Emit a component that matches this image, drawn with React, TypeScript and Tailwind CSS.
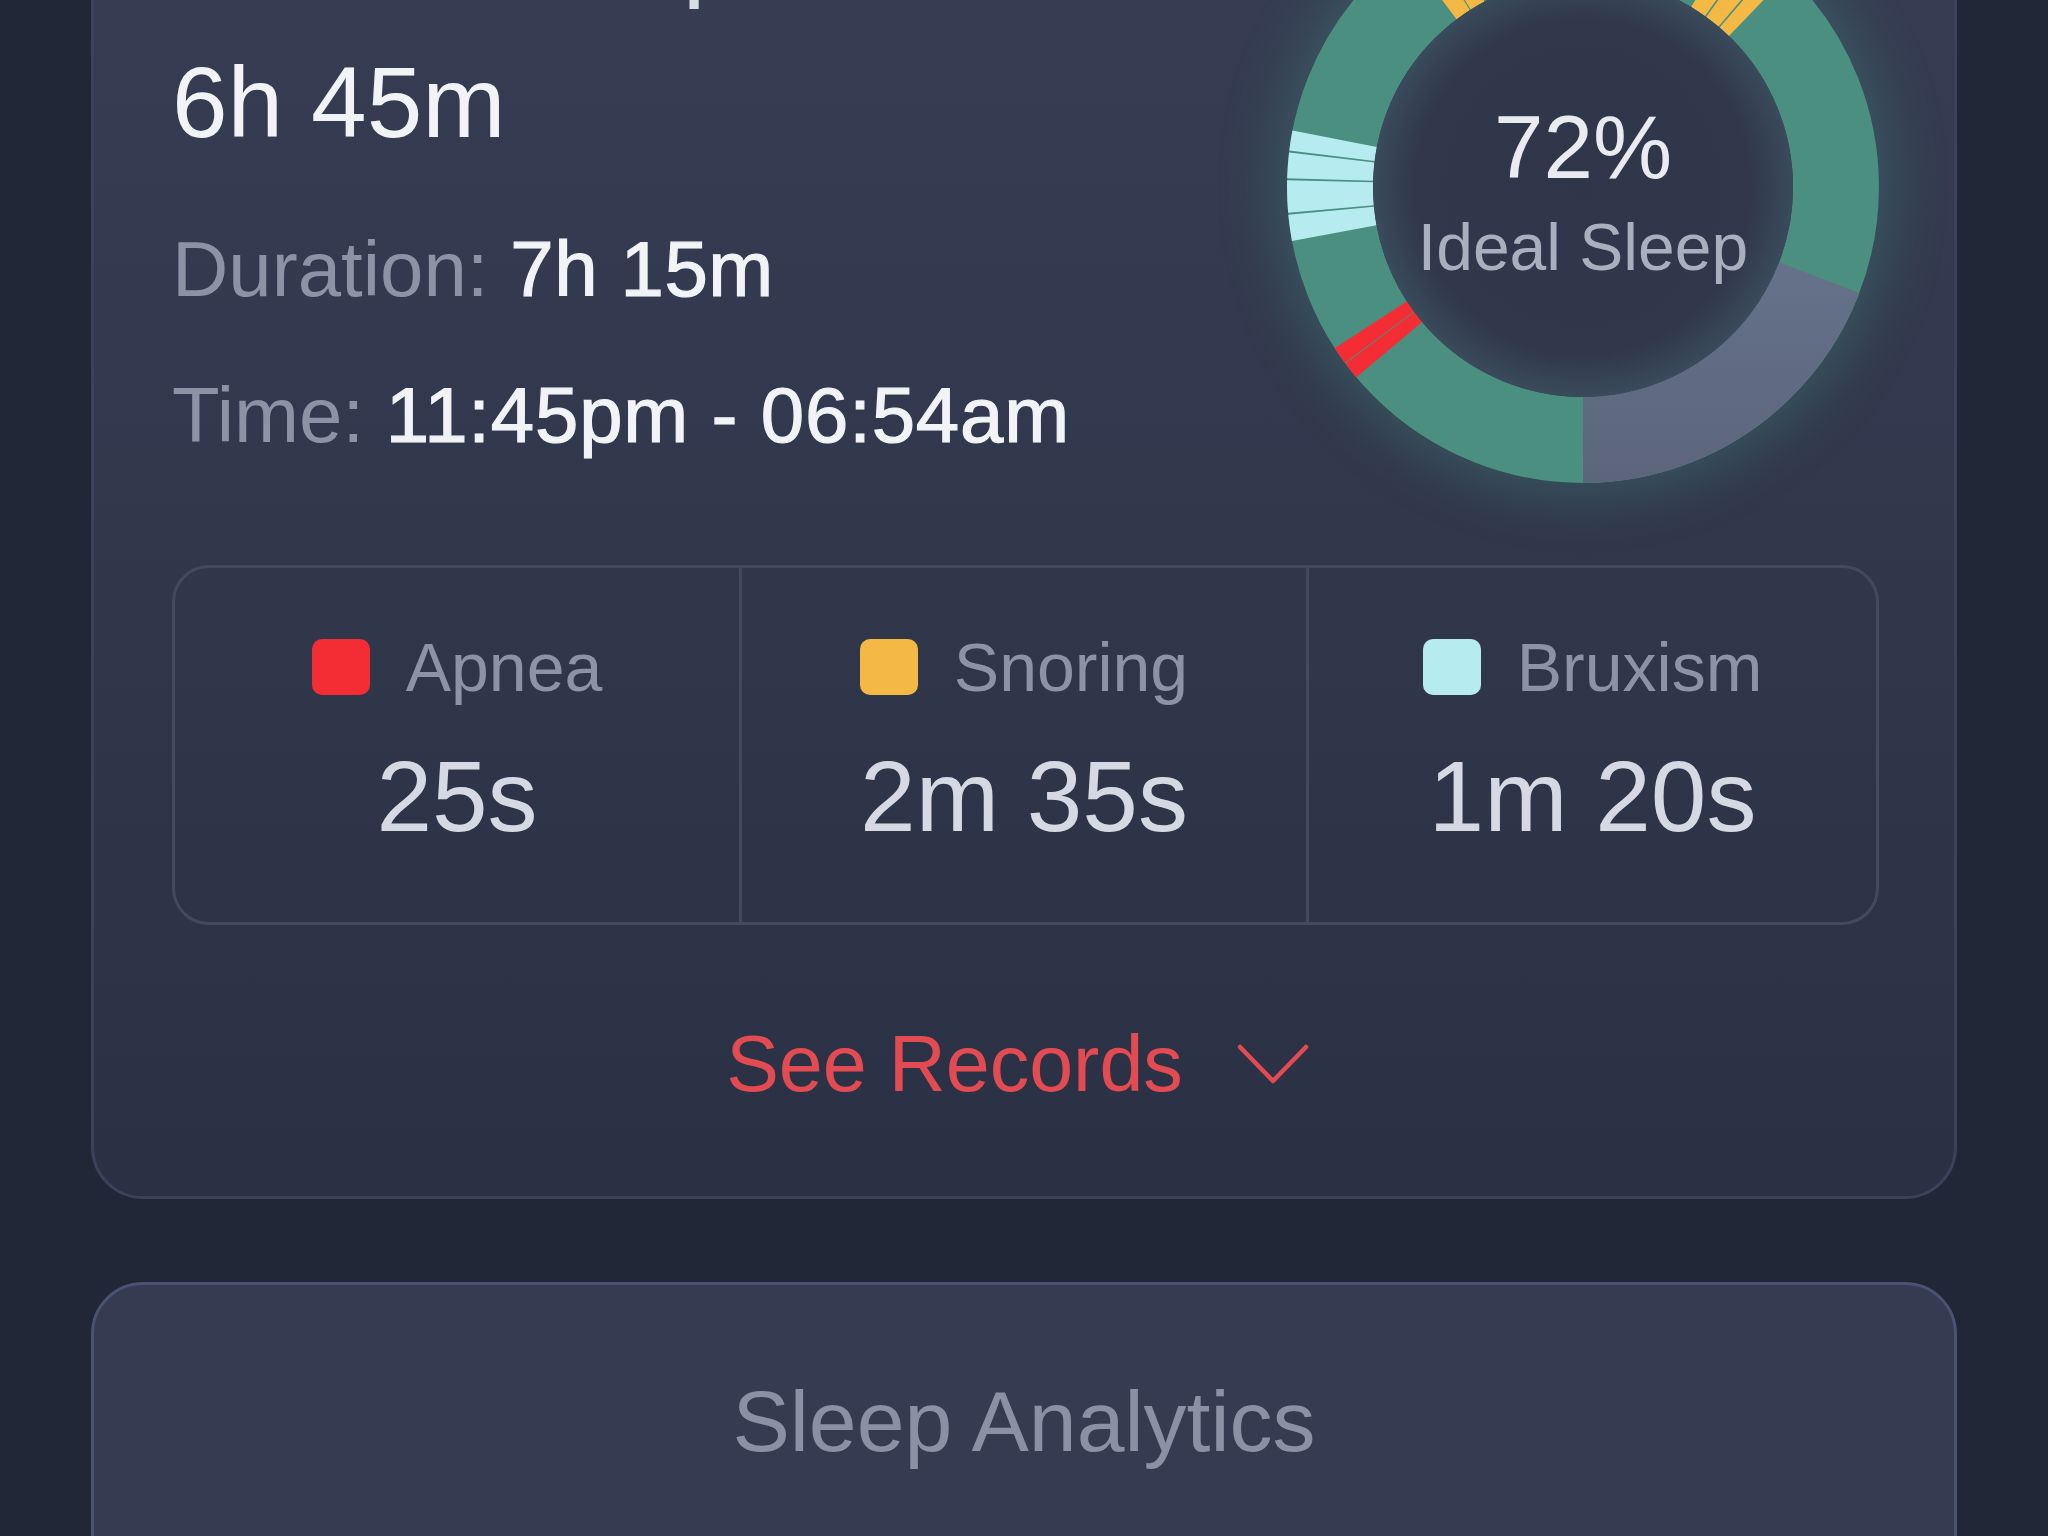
import React from "react";

const C = 296;
const RO = 296;
const RI = 210;

function sector(a0: number, a1: number) {
  const p = (r: number, a: number) => {
    const t = (a * Math.PI) / 180;
    return [C + r * Math.sin(t), C - r * Math.cos(t)];
  };
  const [x0, y0] = p(RO, a0);
  const [x1, y1] = p(RO, a1);
  const [x2, y2] = p(RI, a1);
  const [x3, y3] = p(RI, a0);
  const large = a1 - a0 > 180 ? 1 : 0;
  return `M${x0} ${y0} A${RO} ${RO} 0 ${large} 1 ${x1} ${y1} L${x2} ${y2} A${RI} ${RI} 0 ${large} 0 ${x3} ${y3} Z`;
}

// angles clockwise from 12 o'clock
const segments: { from: number; to: number; color: string }[] = [
  { from: 111, to: 180, color: "url(#awake)" },
  { from: 230, to: 233.4, color: "#f42d35" },
  { from: 233.6, to: 237, color: "#f42d35" },
  { from: 259.5, to: 264.6, color: "#b6ecef" },
  { from: 265.0, to: 271.3, color: "#b6ecef" },
  { from: 271.7, to: 276.7, color: "#b6ecef" },
  { from: 277.1, to: 281, color: "#b6ecef" },
  { from: 323, to: 327.4, color: "#f3b944" },
  { from: 327.7, to: 332, color: "#f3b944" },
  { from: 31, to: 35.5, color: "#f3b944" },
  { from: 35.9, to: 40.2, color: "#f3b944" },
  { from: 40.6, to: 44, color: "#f3b944" },
];

function SleepRing() {
  return (
    <div className="relative h-[592px] w-[592px] shrink-0 rounded-full shadow-[0_0_54px_14px_rgba(72,150,132,0.3)]">
      <svg width="592" height="592" viewBox="0 0 592 592" className="block">
        <defs>
          <radialGradient id="inner" cx="50%" cy="50%" r="50%">
            <stop offset="0%" stopColor="#2f364a" />
            <stop offset="80%" stopColor="#31384c" />
            <stop offset="100%" stopColor="#3a4b5b" />
          </radialGradient>
          <linearGradient id="awake" x1="0" y1="0" x2="0" y2="1">
            <stop offset="0%" stopColor="#65728a" />
            <stop offset="100%" stopColor="#5c657c" />
          </linearGradient>
        </defs>
        <circle cx={C} cy={C} r={(RO + RI) / 2} fill="none" stroke="#4a8f80" strokeWidth={RO - RI} />
        {segments.map((s, i) => (
          <path key={i} d={sector(s.from, s.to)} fill={s.color} />
        ))}
        <circle cx={C} cy={C} r={RI} fill="url(#inner)" />
      </svg>
      <div className="absolute inset-0 flex flex-col items-center pt-[206px]">
        <span className="text-[89px] leading-[100px] text-[#e9ebf1]">72%</span>
        <span className="mt-[10px] text-[66px] leading-[80px] text-[#a9afbd]">Ideal Sleep</span>
      </div>
    </div>
  );
}

const stats = [
  { label: "Apnea", value: "25s", color: "bg-[#f42d35]" },
  { label: "Snoring", value: "2m 35s", color: "bg-[#f3b944]" },
  { label: "Bruxism", value: "1m 20s", color: "bg-[#b6ecef]" },
];

export default function App() {
  return (
    <div className="h-[1536px] overflow-hidden bg-[#222737] px-[91px] font-['Liberation_Sans',Arial,sans-serif]">
      <div className="-mt-[200px] rounded-[52px] border-[3px] border-[#3b4259] bg-gradient-to-b from-[#383f55] to-[#2b3144] pb-[92px] pl-[78px] pr-[75px] pt-[88px]">
        <div className="flex items-start justify-between">
          <div>
            <p className="text-[104px] leading-[120px] text-[#d9dce5]">Time Asleep</p>
            <p className="mt-[31px] text-[100px] leading-[120px] text-[#f1f3f7]">6h 45m</p>
            <p className="mt-[57px] text-[78px] leading-[100px] text-[#8d93a5]">
              Duration:{" "}
              <span className="tracking-[0.6px] text-[#f1f3f7] [-webkit-text-stroke:1.2px_#f1f3f7]">7h 15m</span>
            </p>
            <p className="mt-[46px] text-[78px] leading-[100px] text-[#8d93a5]">
              Time:{" "}
              <span className="tracking-[0.8px] text-[#f1f3f7] [-webkit-text-stroke:1.2px_#f1f3f7]">11:45pm - 06:54am</span>
            </p>
          </div>
          <SleepRing />
        </div>

        <div className="mt-[82px] grid grid-cols-3 divide-x-[3px] divide-[#434a60] rounded-[37px] border-[3px] border-[#434a60]">
          {stats.map((s) => (
            <div key={s.label} className="flex flex-col items-center pb-[76px] pt-[65px]">
              <div className="flex h-[68px] items-center gap-[36px]">
                <span className={`h-[56px] w-[58px] rounded-[10px] ${s.color}`} />
                <span className="text-[68px] leading-[68px] text-[#8d93a5]">{s.label}</span>
              </div>
              <span className="mt-[45px] text-[100px] leading-[100px] text-[#d6d9e3]">{s.value}</span>
            </div>
          ))}
        </div>

        <div className="mt-[99px] flex items-center justify-center pr-[16px]">
          <span className="text-[79px] leading-[80px] text-[#e34b52]">See Records</span>
          <svg width="72" height="42" viewBox="0 0 72 42" className="ml-[54px]" fill="none">
            <path d="M3 4 L36 38 L69 4" stroke="#e34b52" strokeWidth="4.5" strokeLinecap="round" strokeLinejoin="round" />
          </svg>
        </div>
      </div>

      <div className="mt-[83px] rounded-[52px] border-[3px] border-[#4a5371] bg-[#353c51] pb-[200px] pt-[93px] text-center">
        <span className="text-[86px] leading-[86px] text-[#8b91a4]">Sleep Analytics</span>
      </div>
    </div>
  );
}
